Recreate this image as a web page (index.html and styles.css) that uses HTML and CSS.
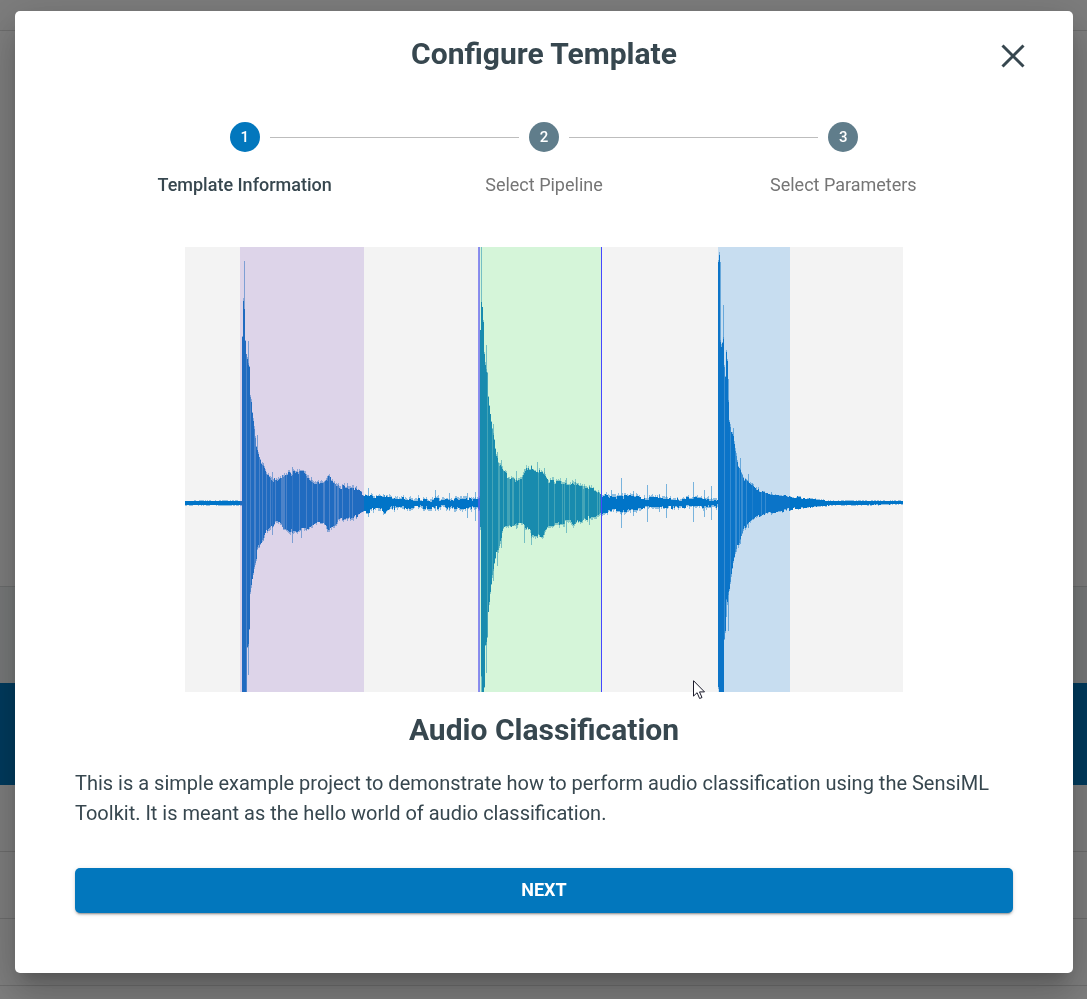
FILE: index.html
```html
<!DOCTYPE html>
<html lang="en">
<head>
<meta charset="utf-8">
<meta name="viewport" content="width=device-width, initial-scale=1">
<title>Configure Template</title>
<link rel="stylesheet" href="styles.css">
</head>
<body>
<div class="page" aria-hidden="true">
  <div class="page-top"></div>
  <div class="page-panel"></div>
  <div class="page-toolbar"></div>
  <div class="page-banner"></div>
  <div class="page-row"></div>
  <div class="page-row"></div>
  <div class="page-row"></div>
  <div class="page-row"></div>
</div>
<div class="backdrop">
  <main class="dialog" role="dialog" aria-modal="true" aria-labelledby="dialog-title">
    <header class="dialog-header">
      <h1 class="heading" id="dialog-title">Configure Template</h1>
      <button class="close" type="button" aria-label="Close">
        <svg class="close-icon" viewBox="0 0 24 24" aria-hidden="true"><path d="M1.5 1.5 22.5 22.5M22.5 1.5 1.5 22.5"/></svg>
      </button>
    </header>
    <ol class="stepper">
      <li class="step step-active" aria-current="step"><span class="step-number">1</span><span class="step-label">Template Information</span></li>
      <li class="step"><span class="step-number">2</span><span class="step-label">Select Pipeline</span></li>
      <li class="step"><span class="step-number">3</span><span class="step-label">Select Parameters</span></li>
    </ol>
    <figure class="preview">
      <svg class="wave" viewBox="0 0 718 445" role="img" aria-label="Audio waveform with three labelled segments">
        <rect class="wave-bg" width="718" height="445"/>
        <rect class="seg-purple" x="55" width="124" height="445"/>
        <rect class="seg-green" x="294" width="122" height="445"/>
        <rect class="seg-blue" x="533" width="72" height="445"/>
        <g id="bars"></g>
        <rect class="marker-soft" x="293" width="2" height="445"/>
        <rect class="marker" x="416" width="1" height="445"/>
      </svg>
      <svg class="cursor" viewBox="0 0 12 20" aria-hidden="true"><path d="M.5 .7v15.4l3.6-3.4 2.5 5.8 2.4-1-2.5-5.6h5z"/></svg>
    </figure>
    <h2 class="heading">Audio Classification</h2>
    <p class="description">This is a simple example project to demonstrate how to perform audio classification using the SensiML Toolkit. It is meant as the hello world of audio classification.</p>
    <button class="next" type="button">NEXT</button>
  </main>
</div>
<script src="wave.js"></script>
</body>
</html>
```
FILE: styles.css
```css
* { box-sizing: border-box; }

body {
  margin: 0;
  min-height: 100vh;
  font-family: Roboto, "Liberation Sans", sans-serif;
  color: #37474f;
  background: #fff;
}

.page {
  position: fixed;
  inset: 0;
  display: flex;
  flex-direction: column;
  overflow: hidden;
}
.page-top { flex: 0 0 31px; background: #fafafa; border-bottom: 1px solid #dcdcdc; }
.page-panel { flex: 0 0 555px; }
.page-toolbar { flex: 0 0 97px; background: #f1f5f6; border-top: 1px solid #d8dcdc; }
.page-banner { flex: 0 0 102px; background: #0277bd; }
.page-row { flex: 0 0 67px; border-bottom: 1px solid #dcdcdc; }

.backdrop {
  position: relative;
  min-height: 100vh;
  padding: 11px 14px 26px 15px;
  background: rgba(0, 0, 0, .5);
}

.dialog {
  padding: 20px 60px 60px;
  background: #fff;
  border-radius: 5px;
  box-shadow: 0 11px 15px -7px rgba(0, 0, 0, .2), 0 24px 38px 3px rgba(0, 0, 0, .14), 0 9px 46px 8px rgba(0, 0, 0, .12);
}

.dialog-header {
  display: grid;
  grid-template-columns: 48px 1fr 48px;
  align-items: start;
  margin: 0 -24px;
}
.dialog-header .heading { grid-column: 2; }

.heading {
  margin: 0;
  font-size: 30px;
  line-height: 45px;
  font-weight: 700;
  text-align: center;
}

.close {
  display: grid;
  place-items: center;
  width: 48px;
  height: 50px;
  padding: 0;
  border: 0;
  background: none;
  color: inherit;
}
.close-icon { width: 24px; height: 24px; fill: none; stroke: currentColor; stroke-width: 3; }

.stepper {
  display: flex;
  margin: 41px 20px 0;
  padding: 0;
  list-style: none;
}
.step {
  position: relative;
  flex: 1;
  display: flex;
  flex-direction: column;
  align-items: center;
  gap: 20px;
  color: #757575;
}
.step + .step::before {
  content: "";
  position: absolute;
  top: 15px;
  left: calc(-50% + 25px);
  right: calc(50% + 25px);
  border-top: 1px solid #bdbdbd;
}
.step-number {
  width: 30px;
  height: 30px;
  border-radius: 50%;
  background: #607d8b;
  color: #fff;
  font-size: 15px;
  line-height: 30px;
  font-weight: 500;
  text-align: center;
}
.step-label { font-size: 18px; line-height: 26px; }
.step-active { color: #37474f; }
.step-active .step-number { background: #0277bd; }
.step-active .step-label { font-weight: 500; }

.preview { position: relative; margin: 49px 110px 15px; }
.wave { display: block; width: 100%; height: auto; shape-rendering: crispEdges; }
.wave-bg { fill: #f3f3f3; }
.seg-purple { fill: #ddd4e9; }
.seg-green { fill: #d5f5d9; }
.seg-blue { fill: #c7ddf0; }
.bars-plain { stroke: #0074c8; }
.bars-purple { stroke: #206bc0; }
.bars-green { stroke: #188bae; }
.bars-blue { stroke: #0b74c8; }
.marker { fill: #4646ff; }
.marker-soft { fill: #6060ee; opacity: .7; }
.cursor { position: absolute; left: 508px; left: calc(71% - 2px); top: calc(97% + 1px); width: 12px; height: 20px; fill: #fff; stroke: #1b1b2b; }

.description { margin: 16px 0 40px; font-size: 20px; line-height: 30px; }

.next {
  display: block;
  width: 100%;
  height: 45px;
  padding: 0 0 2px;
  border: 0;
  border-radius: 5px;
  background: #0277bd;
  color: #fff;
  font: 700 18px/42px Roboto, "Liberation Sans", sans-serif;
  box-shadow: 0 3px 1px -2px rgba(0, 0, 0, .2), 0 2px 2px rgba(0, 0, 0, .14), 0 1px 5px rgba(0, 0, 0, .12);
}
```
FILE: wave.js
```js
// Envelope of the recording: [x, top, bottom], joined by straight lines.
const envelope = [
  [0,254,258],[56,254,258],
  [57,90,445],[58,54,445],[59,62,445],[60,94,445],[61,107,445],[62,112,400],[63,118,397],[64,120,382],[65,150,345],[66,155,338],
  [67,166,332],[69,182,320],[71,200,312],[72,204,302],[74,211,298],[76,219,295],[78,221,290],[80,226,285],
  [84,228,281],[88,233,277],[92,235,276],[96,231,279],[100,226,281],[106,227,284],[111,226,284],[119,226,283],[124,233,279],[130,237,275],[138,236,275],[143,231,281],[147,233,279],
  [151,239,275],[160,241,272],[170,242,269],[179,248,265],[190,250,262],[200,249,264],[206,251,261],[225,252,260],[255,253,260],[275,252,261],[292,252,260],
  [294,250,263],[295,82,280],[296,54,429],[297,60,445],[298,75,445],[299,107,440],[300,118,398],[301,125,395],[302,126,390],[303,150,365],[305,167,345],
  [307,182,328],[309,193,316],[311,211,306],[313,214,302],[315,219,293],[318,226,283],[323,229,280],[330,234,277],[336,234,277],[341,223,280],[346,221,287],[351,225,288],[357,226,288],[362,234,279],
  [375,236,275],[388,236,276],[398,240,272],[410,242,270],[416,248,265],[430,250,263],[446,250,264],[462,252,260],[500,252,260],[530,253,259],[532,253,259],
  [533,15,440],[534,8,445],[535,95,445],[536,100,445],[538,92,445],[539,120,392],[540,130,384],[541,105,352],[542,114,355],[543,155,345],[544,175,342],
  [546,185,327],[548,189,314],[550,204,305],[553,218,297],[556,226,288],[559,234,280],[564,238,275],[570,243,270],[578,246,267],[590,248,265],
  [605,250,262],[628,252,260],[645,254,258],[680,254,258],[717,254,257]
];

// Isolated strokes above or below the body of the wave: [x, top, bottom].
const spikes = [
  [59,14,256],[63,94,428],[72,188,302],[78,216,294],[87,225,288],[107,220,296],[116,226,291],[126,230,277],[142,229,285],[162,236,274],[171,239,272],[183,241,270],[199,248,267],
  [250,243,264],[264,246,263],[282,246,271],[290,245,274],[296,0,445],[301,98,426],[308,177,334],[312,205,319],[316,213,301],[331,224,282],[339,222,296],[346,219,298],[352,215,291],[359,221,288],[381,231,286],[404,239,278],
  [426,243,265],[436,231,281],[448,244,269],[462,238,275],[474,247,265],[481,237,271],[508,235,275],[519,243,270],[526,239,273],
  [535,15,445],[538,58,445],[541,106,370],[543,132,384],[548,181,314],[555,211,297],[563,227,281],[567,236,272],[586,245,268]
];

// Columns where the strokes are sparse and the segment shows through.
const gaps = [65,70,74,81,85,90,97,101,107,114,121,132,139,144,149,153,164,302,307,313,318,323,328,334,337,363,369,377,384,390,398,403,412,539,545,556,561,567,580];

let seed = 7;
function random() {
  seed = (seed * 16807) % 2147483647;
  return seed / 2147483647;
}

function at(x) {
  const i = Math.max(1, envelope.findIndex(p => p[0] >= x));
  const a = envelope[i - 1], b = envelope[i];
  const t = (x - a[0]) / (b[0] - a[0]);
  return [a[1] + (b[1] - a[1]) * t, a[2] + (b[2] - a[2]) * t];
}

function segment(x) {
  if (x >= 55 && x < 179) return "purple";
  if (x >= 295 && x < 416) return "green";
  if (x >= 533 && x < 605) return "blue";
  return "plain";
}

const paths = {};
function bar(x, top, bottom, opacity) {
  const key = segment(x) + "|" + opacity;
  paths[key] = (paths[key] || "") + `M${x}.5 ${Math.round(top)}V${Math.round(bottom)}`;
}

// Quiet parts swing between thin and thick every few columns.
let swellTop = 0, swellBottom = 0;
for (let x = 0; x < 718; x++) {
  const [top, bottom] = at(x);
  const size = bottom - top;
  if (random() < .5) {
    const reach = size > 100 ? 0 : size > 24 ? 5 : x > 179 && x < 533 ? 4 : size > 10 ? 3 : 1;
    swellTop = (random() - .5) * reach;
    swellBottom = (random() - .5) * reach;
  }
  const noise = size > 24 ? 3 : x > 185 && x < 533 ? 3 : 1;
  bar(x, top + swellTop, bottom + swellBottom, gaps.includes(x) || (size > 20 && random() < .12) ? .6 : 1);
  bar(x, top + swellTop - random() * noise, bottom + swellBottom + random() * noise, .4);
}
spikes.forEach(([x, top, bottom]) => bar(x, top, bottom, .5));

const bars = document.getElementById("bars");
Object.entries(paths).forEach(([key, d]) => {
  const [name, opacity] = key.split("|");
  const path = document.createElementNS("http://www.w3.org/2000/svg", "path");
  path.setAttribute("class", "bars-" + name);
  path.setAttribute("opacity", opacity);
  path.setAttribute("d", d);
  bars.append(path);
});
```
